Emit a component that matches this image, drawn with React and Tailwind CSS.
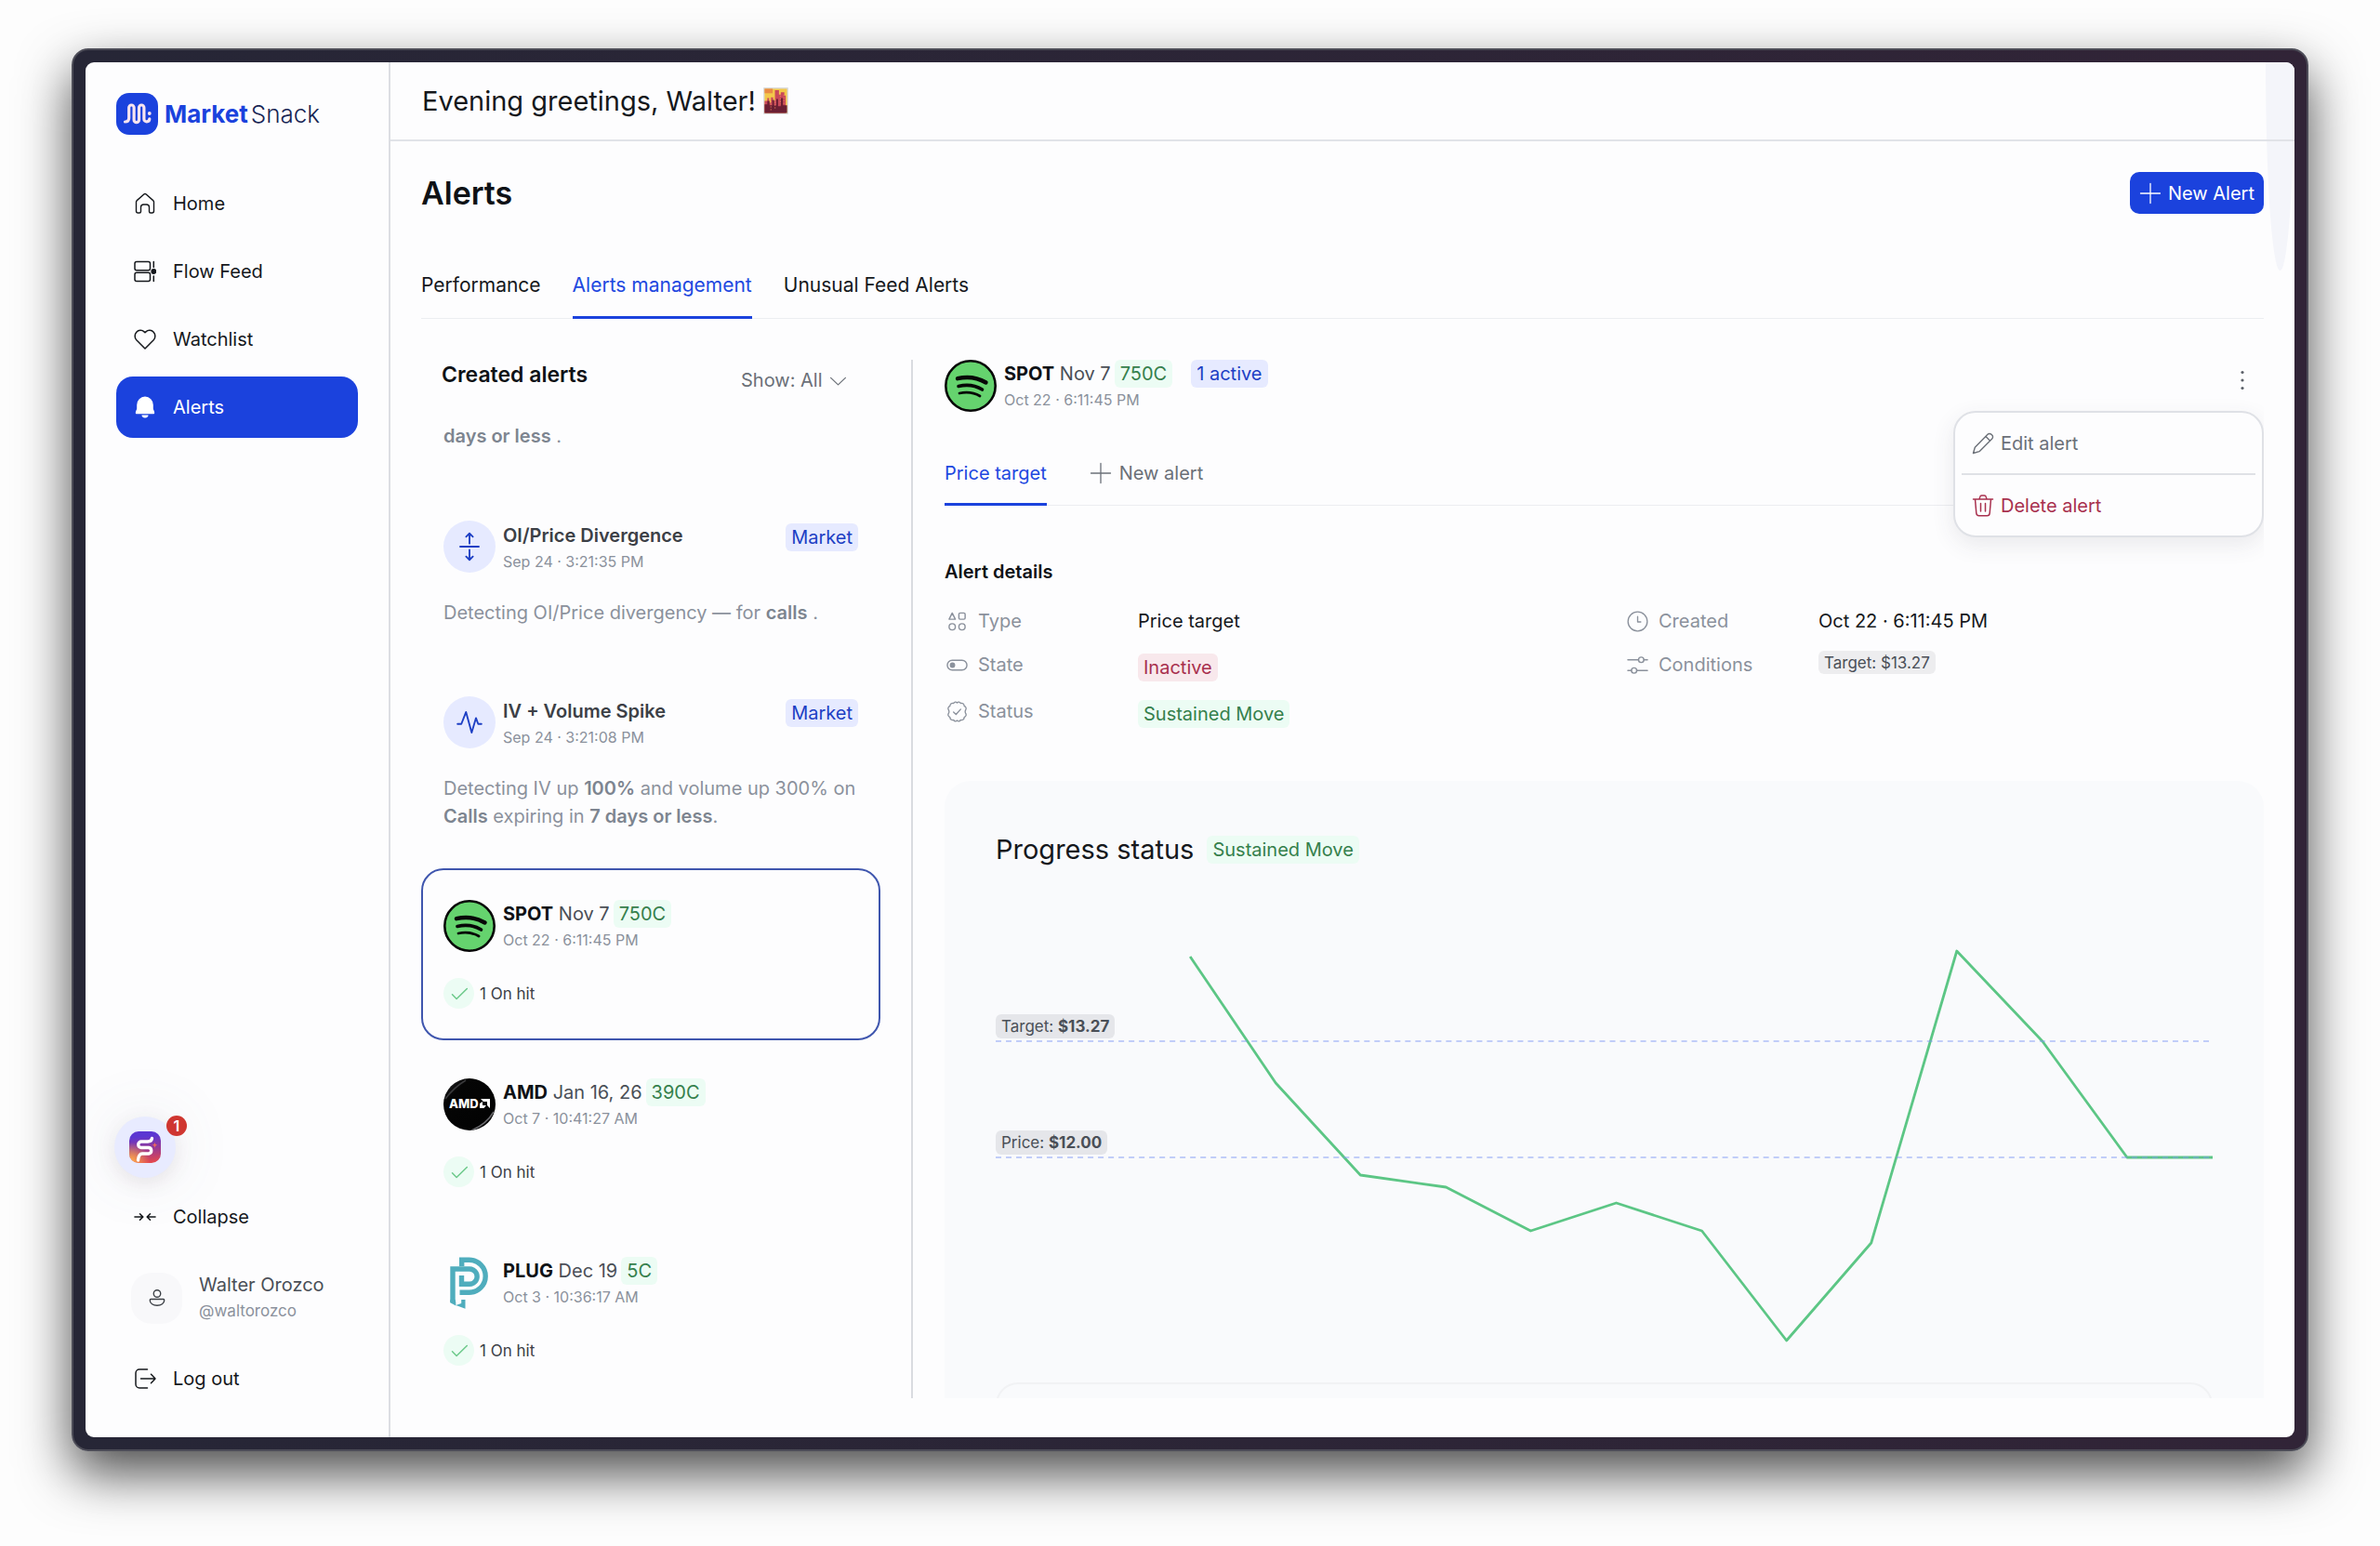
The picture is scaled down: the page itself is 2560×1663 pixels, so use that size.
import React from "react";

function Icon({ className = "size-6", sw = 1.5, children, ...rest }) {
  return (
    <svg viewBox="0 0 24 24" fill="none" stroke="currentColor" strokeWidth={sw} strokeLinecap="round" strokeLinejoin="round" aria-hidden="true" className={`shrink-0 ${className}`} {...rest}>
      {children}
    </svg>
  );
}

const HomeIcon = () => (
  <Icon sw={1.4}><path d="M2.5 10.2a2 2 0 0 1 .8-1.6l7.500-6.600a1.800 1.800 0 0 1 2.400 0l7.500 6.600a2 2 0 0 1 .8 1.600v9.800a2 2 0 0 1-2 2h-1.500a1.500 1.500 0 0 1-1.500-1.500v-4.500a3 3 0 0 0-3-3h-3a3 3 0 0 0-3 3v4.500a1.500 1.500 0 0 1-1.500 1.500h-1.500a2 2 0 0 1-2-2z" /></Icon>
);
const FlowIcon = () => (
  <Icon>
    <rect x="1" y="1.5" width="16.5" height="9.2" rx="2" />
    <rect x="1" y="13.3" width="16.5" height="9.2" rx="2" />
    <path d="M21.3 1.5v6M21.3 17v5.5" />
    <circle cx="21.3" cy="12" r="2.2" fill="currentColor" />
  </Icon>
);
const HeartIcon = () => (
  <Icon><path d="M12 22 2.8 12.8a6.4 6.4 0 0 1 0-8.6 5.8 5.8 0 0 1 8.3-.3l.9.9.9-.9a5.8 5.8 0 0 1 8.3.3 6.4 6.4 0 0 1 0 8.6z" /></Icon>
);
const BellIcon = () => (
  <Icon fill="currentColor" stroke="none">
    <path d="M12 .6a8.8 8.8 0 0 1 8.8 8.8v4.2c0 1.6 1.4 2.6 1.4 4.3 0 .8-.5 1.3-1.3 1.3H3.1c-.8 0-1.3-.5-1.3-1.3 0-1.7 1.4-2.7 1.4-4.3V9.4A8.8 8.8 0 0 1 12 .6z" />
    <path d="M8.5 20.6h7a3.500 2.800 0 0 1-7 0z" />
  </Icon>
);
const CollapseIcon = () => (
  <Icon sw={1.6}><path d="M1 12h8.5M6.500 8.800 9.800 12l-3.300 3.200M23 12h-8.500M17.500 8.800 14.200 12l3.300 3.200" /></Icon>
);
const LogoutIcon = () => (
  <Icon><path d="M14.5 2H6a4 4 0 0 0-4 4v12a4 4 0 0 0 4 4h8.500M7.500 12H23M18.500 7.300 23 12l-4.500 4.700" /></Icon>
);
const PlusIcon = ({ className }) => (
  <Icon className={className} sw={1.3}><path d="M12 1.500v21M1.500 12h21" /></Icon>
);

function Logo() {
  return (
    <a href="#" className="flex items-center gap-[7px]" aria-label="MarketSnack">
      <svg viewBox="0 0 45 45" className="size-[45px]" aria-hidden="true">
        <rect width="45" height="45" rx="14" fill="#1b42dd" />
        <path d="M9.500 31c2.700 0 4.200-1.200 4.200-4V15.700a2.700 2.700 0 0 1 5.400 0V29a2.700 2.700 0 0 0 5.400 0V15.700a2.700 2.700 0 0 1 5.400 0V28c0 3.800 5.900 3.800 5.900-.2" fill="none" stroke="#f8e4ef" strokeWidth="3.200" strokeLinecap="round" strokeLinejoin="round" />
        <circle cx="35.800" cy="22" r="1.900" fill="#f8e4ef" />
      </svg>
      <span className="flex gap-[3px] text-[26px] leading-8">
        <span className="font-bold text-[#1b42dd]">Market</span>
        <span className="font-light text-[#172554]">Snack</span>
      </span>
    </a>
  );
}

function NavItem({ icon, label, active }) {
  return (
    <a href="#" aria-current={active ? "page" : undefined} className={`flex h-[66px] items-center gap-[18px] rounded-[18px] px-[19px] ${active ? "bg-[#1b42dd] text-white" : "text-[#15181c]"}`}>
      {icon}
      <span>{label}</span>
    </a>
  );
}

function Sidebar() {
  return (
    <aside className="flex w-[328px] shrink-0 flex-col border-r-2 border-[#dcdee3] px-[33px] pt-[33px] pb-[30px]">
      <Logo />
      <nav className="mt-[41px] flex flex-col gap-[7px]">
        <NavItem icon={<HomeIcon />} label="Home" />
        <NavItem icon={<FlowIcon />} label="Flow Feed" />
        <NavItem icon={<HeartIcon />} label="Watchlist" />
        <NavItem icon={<BellIcon />} label="Alerts" active />
      </nav>
      <div className="mt-auto flex flex-col">
        <button type="button" aria-label="Open assistant, 1 new message" className="relative -ml-0.5 flex size-[66px] items-center justify-center rounded-full bg-[#e8ebff] shadow-[0_6px_20px_rgba(120,90,110,0.12),0_0_70px_rgba(90,110,130,0.12)]">
          <svg viewBox="0 0 34 34" className="size-[34px]" aria-hidden="true">
            <defs>
              <linearGradient id="snack" x1="0.500" y1="0" x2="0.600" y2="1">
                <stop offset="0.150" stopColor="#5b36d2" />
                <stop offset="0.600" stopColor="#a03a8c" />
                <stop offset="1" stopColor="#e5484d" />
              </linearGradient>
              <radialGradient id="glow" cx="0.050" cy="0.950" r="0.600">
                <stop offset="0" stopColor="#ffb04a" />
                <stop offset="1" stopColor="#ffb04a" stopOpacity="0" />
              </radialGradient>
            </defs>
            <rect width="34" height="34" rx="10" fill="url(#snack)" />
            <rect width="34" height="34" rx="10" fill="url(#glow)" />
            <path d="M24.500 7.500c-.5 3-2 3.500-4.500 3.500h-7a3.200 3.200 0 0 0 0 6.500h8a3.300 3.300 0 0 1 0 6.500h-7c-3 0-4 2-4.500 7" fill="none" stroke="#fff" strokeWidth="3.400" strokeLinecap="round" />
            <path d="m27.500 12 .8 2 2 .8-2 .8-.8 2-.8-2-2-.8 2-.8z" fill="#ef6a5a" />
          </svg>
          <span className="absolute -top-px -right-3 flex size-[22px] items-center justify-center rounded-full bg-[#cf3630] text-[16px] leading-none font-semibold text-white">1</span>
        </button>
        <button type="button" className="mt-[9px] flex h-[66px] items-center gap-[18px] px-[19px] text-left text-[#15181c]">
          <CollapseIcon />
          <span>Collapse</span>
        </button>
        <div className="mt-[26px] flex items-center gap-[18px] pl-4">
          <span className="flex size-[55px] items-center justify-center rounded-[22px] bg-[#f8f8fa] text-[#3c4046]">
            <Icon className="size-[18px]" sw={1.8}>
              <circle cx="12" cy="6" r="5" />
              <path d="M3 14h18a1.500 1.500 0 0 1 1.300 1.500c0 4.500-4.600 7.500-10.300 7.500S1.700 20 1.700 15.500A1.500 1.500 0 0 1 3 14z" />
            </Icon>
          </span>
          <span className="flex flex-col">
            <span className="leading-7 text-[#4a4f57]">Walter Orozco</span>
            <span className="text-[17px] leading-7 text-[#8b919c]">@waltorozco</span>
          </span>
        </div>
        <a href="#" className="mt-[26px] flex h-[66px] items-center gap-[18px] px-[19px] text-[#15181c]">
          <LogoutIcon />
          <span>Log out</span>
        </a>
      </div>
    </aside>
  );
}

function CityIcon() {
  return (
    <svg viewBox="0 0 28 30" className="h-[29px] w-[27px]" role="img" aria-label="City at dusk">
      <rect width="28" height="30" rx="1" fill="#dcdde0" />
      <rect x="1.500" y="1.500" width="25" height="27" fill="#f3c84a" />
      <rect x="1.500" y="1.500" width="9" height="5" fill="#e98a45" />
      <path d="M1.500 15h3v-3h2v5h2v-6h2.500v4h2V3h4.500v5h2V5.500h4V9h1.500v19.500H1.500z" fill="#c9485a" />
      <path d="M1.500 19h3v-4h2.500v5h3v-6h2v6h2.500v-7h2v8h3v-9h2.500v8h4.500v8.500H1.500z" fill="#6b1f33" />
      <path d="M8.500 12v14M13.200 10v14M19 9v10M23 8v12" stroke="#f08a5a" strokeWidth="0.800" strokeDasharray="1.500 1.500" />
    </svg>
  );
}

const tones = {
  green: "bg-[#ecfcf4] text-[#35804c]",
  blue: "bg-[#e6eaff] text-[#1d3fc4]",
  red: "bg-[#f8e8ec] text-[#a8304e]",
};

function Badge({ tone, className = "", children }) {
  return <span className={`inline-flex h-[30px] items-center rounded-md px-1.5 whitespace-nowrap ${tones[tone]} ${className}`}>{children}</span>;
}

function SpotifyLogo() {
  return (
    <svg viewBox="0 0 56 56" className="size-14 shrink-0" aria-hidden="true">
      <circle cx="28" cy="28" r="26.700" fill="#65d36e" stroke="#070707" strokeWidth="2.600" />
      <g fill="none" stroke="#070707" strokeLinecap="round">
        <path d="M14 20.200c10-2.400 21-1.200 30.500 4.300" strokeWidth="4.400" />
        <path d="M15 28.500c9-2.200 18-1 25.500 3.500" strokeWidth="3.600" />
        <path d="M16 36c7.500-1.600 15.500-.8 22 3" strokeWidth="2.800" />
      </g>
    </svg>
  );
}

function AmdLogo() {
  return (
    <svg viewBox="0 0 56 56" className="size-14 shrink-0" aria-hidden="true">
      <defs>
        <clipPath id="amdDisc"><circle cx="28" cy="28" r="28" /></clipPath>
        <linearGradient id="sheen" x1="0" y1="0" x2="1" y2="1">
          <stop offset="0" stopColor="#2a2a2c" />
          <stop offset="0.250" stopColor="#050505" />
          <stop offset="0.850" stopColor="#020202" />
          <stop offset="1" stopColor="#47474a" />
        </linearGradient>
      </defs>
      <g clipPath="url(#amdDisc)">
        <rect width="56" height="56" fill="url(#sheen)" />
        <path d="M2 22C8 14 14 8 24 2" stroke="#3a3a3c" strokeWidth="1.500" fill="none" />
        <path d="M30 56c10-4 18-10 24-20" stroke="#6a6a6e" strokeWidth="1.500" fill="none" />
      </g>
      <text x="6" y="32" fill="#fff" fontSize="13" fontWeight="800" fontFamily="Inter, sans-serif">AMD</text>
      <path d="M40 22h10v10l-3-3v-4h-4zM39 27l3-2v4h4l-2.500 3H39z" fill="#fff" />
    </svg>
  );
}

function PlugLogo() {
  return (
    <svg viewBox="0 0 56 56" className="size-14 shrink-0" aria-hidden="true">
      <g fill="none" stroke="#4fadbd" strokeWidth="5.400">
        <path d="M19.700 10V3.200h8a17.500 17.500 0 0 1 0 35H17.500" />
        <path d="M10 49V13H28a8 8 0 0 1 0 16.300h-8.500V20" />
      </g>
      <path d="M7.300 46v3.200l6 3.300v-3.500l-.6-3zM13.300 52l10.200 3.800V46h-4.300v4z" fill="#4fadbd" />
    </svg>
  );
}

function Contract({ symbol, expiry, strike, date, children }) {
  return (
    <div className="flex flex-col">
      <div className="flex items-center gap-1 leading-[30px] text-[#4a4f57]">
        <span><strong className="font-bold text-[#0f1216]">{symbol}</strong> {expiry}</span>
        <Badge tone="green">{strike}</Badge>
        {children}
      </div>
      <span className="text-[16px] leading-[26px] text-[#8b919c]">{date}</span>
    </div>
  );
}

const tickers = [
  { symbol: "SPOT", expiry: "Nov 7", strike: "750C", date: "Oct 22 · 6:11:45 PM", logo: <SpotifyLogo />, selected: true },
  { symbol: "AMD", expiry: "Jan 16, 26", strike: "390C", date: "Oct 7 · 10:41:27 AM", logo: <AmdLogo /> },
  { symbol: "PLUG", expiry: "Dec 19", strike: "5C", date: "Oct 3 · 10:36:17 AM", logo: <PlugLogo /> },
];

function TickerCard({ item }) {
  return (
    <article className={`flex flex-col gap-7 rounded-[24px] border-2 px-[22px] py-8 ${item.selected ? "border-[#3f56ae]" : "border-transparent"}`}>
      <div className="flex gap-2">
        {item.logo}
        <Contract {...item} />
      </div>
      <div className="flex items-center gap-1.5 text-[17px] text-[#3c4046]">
        <span className="flex size-[33px] items-center justify-center rounded-full bg-[#ecfcf4] text-[#6cc98a]">
          <Icon className="size-5" sw={1.8}><path d="m3 13 5.500 5.500L22 5.500" /></Icon>
        </span>
        1 On hit
      </div>
    </article>
  );
}

function MarketCard({ title, date, icon, children }) {
  return (
    <article className="flex flex-col gap-7 px-6 py-[34px]">
      <div className="flex gap-2">
        <span className="flex size-14 items-center justify-center rounded-full bg-[#e6eaff] text-[#1d3fc4]">{icon}</span>
        <div className="flex flex-1 flex-col">
          <h3 className="leading-8 font-semibold text-[#3c4046]">{title}</h3>
          <span className="text-[16px] leading-6 text-[#8b919c]">{date}</span>
        </div>
        <Badge tone="blue" className="mt-[3px]">Market</Badge>
      </div>
      <p className="leading-[30px] text-[#8b919c] [&>strong]:font-semibold [&>strong]:text-[#7d8590]">{children}</p>
    </article>
  );
}

function CreatedAlerts() {
  return (
    <section className="flex w-[494px] shrink-0 flex-col overflow-hidden">
      <div className="flex h-[67px] shrink-0 items-start justify-between pr-9 pl-[22px]">
        <h2 className="text-[23px] leading-8 font-semibold text-[#0f1216]">Created alerts</h2>
        <div className="relative flex h-11 items-center text-[#6b7078]">
          <select aria-label="Filter alerts" className="h-11 w-[114px] appearance-none bg-transparent outline-none" defaultValue="all">
            <option value="all">Show: All</option>
          </select>
          <Icon className="pointer-events-none absolute right-0 size-[19px]"><path d="m2 8 10 9.500L22 8" /></Icon>
        </div>
      </div>
      <div className="flex min-h-0 flex-1 flex-col gap-[7px] overflow-hidden">
        <p className="px-6 pb-[35px] leading-[30px] text-[#8b919c]"><strong className="font-semibold text-[#7d8590]">days or less</strong> .</p>
        <MarketCard title="OI/Price Divergence" date="Sep 24 · 3:21:35 PM" icon={<Icon className="size-8" sw={1.4}><path d="M12 9.500V1.500M9.300 4l2.700-2.700L14.700 4M4.500 12h15M12 14.500v8M9.300 20l2.700 2.700 2.700-2.700" /></Icon>}>
          Detecting OI/Price divergency — for <strong>calls</strong> .
        </MarketCard>
        <MarketCard title="IV + Volume Spike" date="Sep 24 · 3:21:08 PM" icon={<Icon className="size-7" sw={1.6}><path d="M1 13.500h3.500L8.800 2.500l5.200 19 4-13.500 2 5.500h3" /></Icon>}>
          Detecting IV up <strong>100%</strong> and volume up 300% on <strong>Calls</strong> expiring in <strong>7 days or less</strong>.
        </MarketCard>
        {tickers.map((t) => <TickerCard key={t.symbol} item={t} />)}
      </div>
    </section>
  );
}

function Detail({ icon, label, children }) {
  return (
    <div className="flex items-start">
      <dt className="flex w-[208px] shrink-0 items-center gap-[11px] pl-0.5 leading-[30px] text-[#8b919c]">{icon}{label}</dt>
      <dd className="leading-[30px] text-[#15181c]">{children}</dd>
    </div>
  );
}

const series = [[209, 49], [301, 185], [392, 284], [484, 297], [575, 344], [667, 314], [759, 344], [850, 462], [941, 357], [1033, 43], [1125, 140], [1216, 265], [1308, 265]];
const seriesPoints = series.map((p) => p.join(",")).join(" ");

function Progress() {
  return (
    <section className="mt-[57px] flex flex-col rounded-t-[28px] bg-[#f9fafc] px-[55px] pt-[53px]">
      <div className="flex items-center gap-3.5">
        <h2 className="text-[29px] leading-[42px] text-[#15181c]">Progress status</h2>
        <Badge tone="green">Sustained Move</Badge>
      </div>
      <div className="relative mt-[45px] h-[480px]">
        <svg viewBox="0 0 1308 480" preserveAspectRatio="none" className="size-full" role="img" aria-label="Price progress chart">
          <polyline points={seriesPoints} fill="none" stroke="#5cc685" strokeWidth="2.800" strokeLinejoin="round" />
          <path d="M0 140h1308M0 265h1308" stroke="#7d97f5" strokeOpacity="0.450" strokeWidth="2" strokeDasharray="6 5" />
        </svg>
        <span className="absolute top-[111px] left-0 rounded-md bg-[#e5e6ea] px-1.5 text-[17px] leading-[26px] text-[#4a4f57]">Target: <strong>$13.27</strong></span>
        <span className="absolute top-[236px] left-0 rounded-md bg-[#e5e6ea] px-1.5 text-[17px] leading-[26px] text-[#4a4f57]">Price: <strong>$12.00</strong></span>
      </div>
      <div className="mt-[27px] h-24 shrink-0 rounded-t-[24px] border-2 border-b-0 border-[#f1f2f4]" />
    </section>
  );
}

function ActionsMenu() {
  return (
    <div role="menu" className="absolute top-[55px] right-0 z-10 w-[334px] rounded-[24px] border-2 border-[#dfe1e6] bg-[#fdfdfe] px-[7px] shadow-[0_8px_24px_rgba(60,60,80,0.10)]">
      <button type="button" role="menuitem" className="flex h-[65px] w-full items-center gap-[7px] px-[11px] text-[#6b7078]">
        <Icon className="size-6" sw={1.4}><path d="M1.500 22.500l1.800-6.300L17 2.300a2.700 2.700 0 0 1 3.900 0l.8.8a2.700 2.700 0 0 1 0 3.900L8 20.700zM15 4.500l4.700 4.700" /></Icon>
        Edit alert
      </button>
      <hr className="border-t-2 border-[#dfe1e6]" />
      <button type="button" role="menuitem" className="flex h-[65px] w-full items-center gap-[7px] px-[11px] text-[#a8304e]">
        <Icon className="size-6"><path d="M1.500 5h21M8 5l.8-2.600A1.800 1.800 0 0 1 10.500 1h3a1.800 1.800 0 0 1 1.700 1.400L16 5M3.500 5l1.300 15a3 3 0 0 0 3 2.800h8.400a3 3 0 0 0 3-2.800l1.300-15M9.500 9.500v8.500M14.500 9.500v8.500" /></Icon>
        Delete alert
      </button>
    </div>
  );
}

function AlertDetail() {
  return (
    <section className="flex min-w-0 flex-1 flex-col">
      <div className="relative flex items-start justify-between">
        <div className="flex gap-2">
          <SpotifyLogo />
          <Contract symbol="SPOT" expiry="Nov 7" strike="750C" date="Oct 22 · 6:11:45 PM">
            <Badge tone="blue" className="ml-4">1 active</Badge>
          </Contract>
        </div>
        <button type="button" aria-label="Alert actions" className="mt-2.5 mr-[11px] flex size-6 items-center justify-center text-[#5b6068]">
          <Icon className="size-6" fill="currentColor" stroke="none"><circle cx="12" cy="3.500" r="1.600" /><circle cx="12" cy="12" r="1.600" /><circle cx="12" cy="20.500" r="1.600" /></Icon>
        </button>
        <ActionsMenu />
      </div>
      <div className="mt-[31px] flex h-[70px] shrink-0 gap-[46px] border-b border-[#eceef1]">
        <button type="button" className="-mb-px border-b-3 border-[#1b42dd] pt-0.5 text-[#2148e0]">Price target</button>
        <button type="button" className="flex items-center gap-2 text-[#6b7078]"><PlusIcon className="size-6" />New alert</button>
      </div>
      <h3 className="mt-14 leading-[30px] font-semibold text-[#0f1216]">Alert details</h3>
      <dl className="mt-[23px] grid grid-cols-2 gap-x-[45px] gap-y-[17px]">
        <Detail label="Type" icon={<Icon className="size-[23px]"><path d="M6.500 2.500 10 9.500H3z" /><rect x="14" y="2.500" width="7" height="7" rx="1.500" /><circle cx="6.500" cy="18" r="3.500" /><circle cx="17.500" cy="18" r="3.500" /></Icon>}>Price target</Detail>
        <Detail label="Created" icon={<Icon className="size-[23px]" sw={1.4}><circle cx="12" cy="12" r="10.800" /><path d="M12 6.500V12.500h3.500" /></Icon>}>Oct 22 · 6:11:45 PM</Detail>
        <Detail label="State" icon={<Icon className="size-[23px]"><rect x="1" y="6.500" width="22" height="11" rx="5.500" /><circle cx="6.800" cy="12" r="2.300" fill="currentColor" /></Icon>}><Badge tone="red" className="mt-[3px]">Inactive</Badge></Detail>
        <Detail label="Conditions" icon={<Icon className="size-[23px]"><path d="M1 6h12M19 6h4M1 18h4M11 18h12" /><circle cx="16" cy="6" r="3" /><circle cx="8" cy="18" r="3" /></Icon>}><span className="flex h-[25px] items-center rounded-md bg-[#ededef] px-1.5 text-[17px] text-[#4a4f57]">Target: $13.27</span></Detail>
        <Detail label="Status" icon={<Icon className="size-[23px]" sw={1.4}><path d="M12 2q2-2 4 .6q3.800-.4 4 3q3.200 1.800 1.500 4.700q-.9 1.700 0 3.400q1.700 2.900-1.500 4.700q-.2 3.400-4 3q-2 2.600-4 .6q-2 2-4-.6q-3.800.4-4-3q-3.200-1.800-1.500-4.700q.9-1.700 0-3.400q-1.700-2.900 1.500-4.700q.2-3.400 4-3q2-2.600 4-.6z" /><path d="m8 12.500 2.800 2.700L16 9.300" /></Icon>}><Badge tone="green" className="mt-[3px]">Sustained Move</Badge></Detail>
      </dl>
      <Progress />
    </section>
  );
}

function Tab({ active, children }) {
  return (
    <button type="button" role="tab" aria-selected={!!active} className={`-mb-px border-b-3 pt-0.5 text-[21px] ${active ? "border-[#1b42dd] text-[#2148e0]" : "border-transparent text-[#15181c]"}`}>{children}</button>
  );
}

export default function App() {
  return (
    <div className="flex h-screen bg-[#fdfdfd] px-[77px] pt-[52px] pb-[102px] font-[Inter,sans-serif] text-[20px] leading-[30px]">
      <div className="flex min-w-0 flex-1 rounded-[18px] border-2 border-[#4c4c57] bg-linear-to-r from-[#262636] to-[#312437] p-[13px] shadow-[0_24px_56px_rgba(0,0,0,0.7)]">
        <div className="relative flex min-w-0 flex-1 overflow-hidden rounded-[9px] bg-[#fdfdfe]">
          <div className="absolute -top-56 right-0 h-[448px] w-[31px] rounded-[50%] bg-[#f4f5fa]" />
          <Sidebar />
          <main className="relative flex min-w-0 flex-1 flex-col">
            <header className="flex h-[85px] shrink-0 items-center gap-2 border-b-2 border-[#e1e3e8] px-[34px] text-[29px] text-[#15181c]">
              Evening greetings, Walter!
              <CityIcon />
            </header>
            <div className="flex min-h-0 flex-1 flex-col px-[33px] pt-[33px] pb-[42px]">
              <div className="flex items-center justify-between">
                <h1 className="text-[34px] leading-[45px] font-semibold text-[#0f1216]">Alerts</h1>
                <button type="button" className="flex h-[45px] items-center gap-[7px] rounded-[10px] bg-[#1b42dd] px-2.5 text-white"><PlusIcon className="size-6" />New Alert</button>
              </div>
              <div role="tablist" className="mt-[42px] flex h-[71px] shrink-0 gap-[34px] border-b border-[#eceef1]">
                <Tab>Performance</Tab>
                <Tab active>Alerts management</Tab>
                <Tab>Unusual Feed Alerts</Tab>
              </div>
              <div className="mt-11 flex min-h-0 flex-1 overflow-hidden">
                <CreatedAlerts />
                <div className="mr-[34px] ml-[33px] w-0.5 shrink-0 bg-[#d9dbe0]" />
                <AlertDetail />
              </div>
            </div>
          </main>
        </div>
      </div>
    </div>
  );
}
